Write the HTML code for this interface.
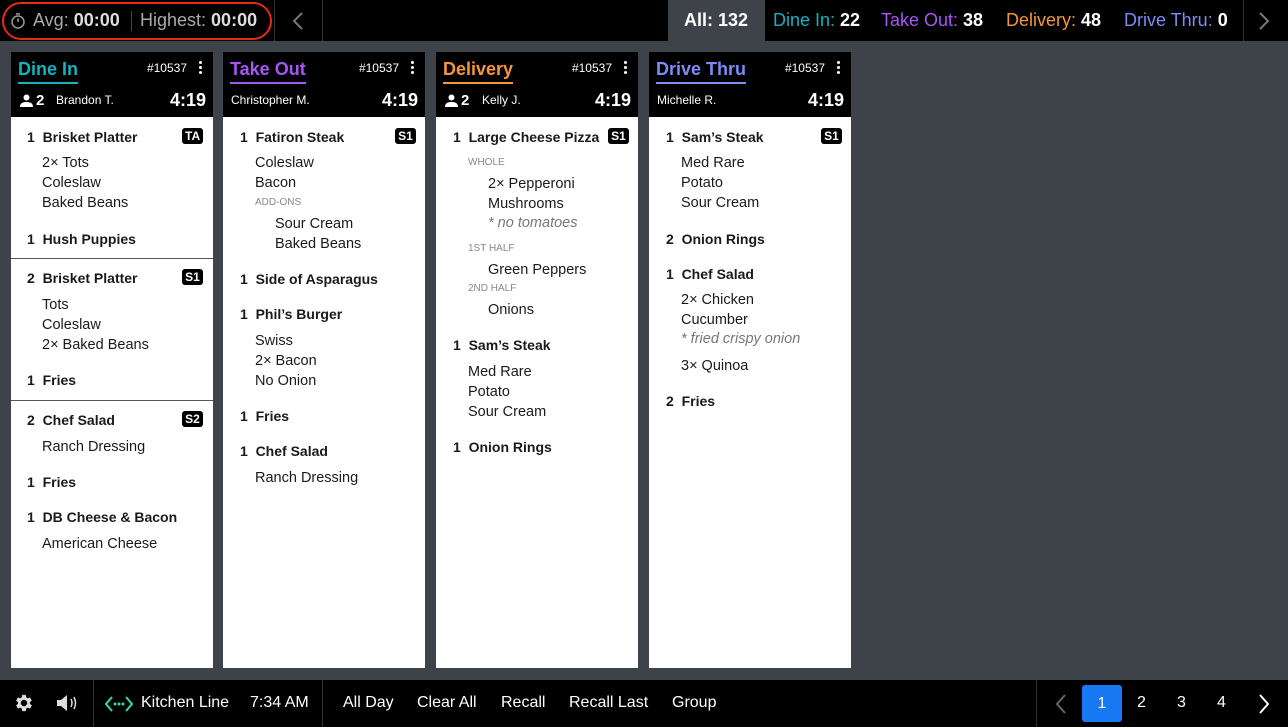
<!DOCTYPE html>
<html><head><meta charset="utf-8"><style>
*{margin:0;padding:0;box-sizing:border-box}
body{width:1288px;height:727px;background:#3e434a;font-family:"Liberation Sans",sans-serif;position:relative;overflow:hidden;color:#111}
.abs{position:absolute;white-space:nowrap}
#top{position:absolute;left:0;top:0;width:1288px;height:41px;background:#000}
#bot{position:absolute;left:0;top:680px;width:1288px;height:47px;background:#000}
.card{position:absolute;top:52px;width:202px;height:616px;background:#fff}
.hd{position:absolute;left:0;top:0;width:202px;height:65px;background:#000;color:#fff}
.ttl{position:absolute;left:7px;top:7px;font-size:18px;font-weight:bold;padding-bottom:2px;border-bottom:2px solid}
.num{position:absolute;right:26px;top:9px;font-size:12px}
.dots{position:absolute;right:11px;top:9px;width:3px}
.dots i{display:block;width:3px;height:3px;background:#fff;border-radius:50%;margin-bottom:2px}
.nm{position:absolute;top:41px;font-size:12px}
.tm{position:absolute;right:7px;top:38px;font-size:18px;font-weight:bold}
.t{position:absolute;white-space:nowrap;font-size:14.5px;line-height:18px;color:#1a1a1a}
.b{font-weight:bold;font-size:14px}
.s{font-size:10px;color:#888;line-height:12px}
.it{font-style:italic;color:#777}
.bd{position:absolute;background:#000;color:#fff;font-size:12px;font-weight:bold;padding:1px 3px;border-radius:3px;line-height:14px;width:21px;text-align:center}
.g{color:#aaa}
</style></head><body>
<div id="top">
 <div class="abs" style="left:2px;top:2px;width:270px;height:38px;border:2px solid #e8281a;border-radius:20px"></div>
 <svg class="abs" style="left:10px;top:12px" width="16" height="18" viewBox="0 0 16 18"><circle cx="8" cy="10" r="6" fill="none" stroke="#999" stroke-width="1.5"/><path d="M6 2h4M8 10V6.5" stroke="#999" stroke-width="1.5"/></svg>
 <div class="abs" style="left:33px;top:10px;font-size:18px;color:#aaa">Avg: <b style="color:#ddd">00:00</b></div>
 <div class="abs" style="left:131px;top:11px;width:1px;height:20px;background:#444"></div>
 <div class="abs" style="left:140px;top:10px;font-size:18px;color:#aaa">Highest: <b style="color:#ddd">00:00</b></div>
 <div class="abs" style="left:274px;top:0;width:1px;height:41px;background:#333"></div>
 <svg class="abs" style="left:292px;top:12px" width="12" height="18"><path d="M10 1L2 9l8 8" fill="none" stroke="#777" stroke-width="2"/></svg>
 <div class="abs" style="left:322px;top:0;width:1px;height:41px;background:#333"></div>
 <div class="abs" style="left:668px;top:0;width:97px;height:41px;background:#3e434a"></div>
 <div class="abs" style="left:684px;top:10px;font-size:18px;color:#fff;font-weight:bold">All: 132</div>
 <div class="abs" style="left:773px;top:10px;font-size:18px;color:#15b2c0">Dine In: <b style="color:#fff">22</b></div>
 <div class="abs" style="left:881px;top:10px;font-size:18px;color:#a855f7">Take Out: <b style="color:#fff">38</b></div>
 <div class="abs" style="left:1006px;top:10px;font-size:18px;color:#f5963a">Delivery: <b style="color:#fff">48</b></div>
 <div class="abs" style="left:1124px;top:10px;font-size:18px;color:#7b8cf5">Drive Thru: <b style="color:#fff">0</b></div>
 <div class="abs" style="left:1243px;top:0;width:1px;height:41px;background:#333"></div>
 <svg class="abs" style="left:1258px;top:12px" width="12" height="18"><path d="M2 1l8 8-8 8" fill="none" stroke="#777" stroke-width="2"/></svg>
</div>

<div class="card" style="left:11px">
 <div class="hd"><div class="ttl" style="color:#15b2c0">Dine In</div><div class="num">#10537</div><div class="dots"><i></i><i></i><i></i></div>
 <svg class="abs" style="left:9px;top:42px" width="13" height="13"><circle cx="6.5" cy="3.5" r="3" fill="#fff"/><path d="M0 13c0-4 3-5 6.5-5s6.5 1 6.5 5z" fill="#fff"/></svg>
 <div class="abs" style="left:25px;top:40px;font-size:15px;font-weight:bold">2</div>
 <div class="nm" style="left:45px">Brandon T.</div><div class="tm">4:19</div></div>
</div>
<div class="card" style="left:223px">
 <div class="hd"><div class="ttl" style="color:#a855f7">Take Out</div><div class="num">#10537</div><div class="dots"><i></i><i></i><i></i></div>
 <div class="nm" style="left:8px">Christopher M.</div><div class="tm">4:19</div></div>
</div>
<div class="card" style="left:436px">
 <div class="hd"><div class="ttl" style="color:#f5963a">Delivery</div><div class="num">#10537</div><div class="dots"><i></i><i></i><i></i></div>
 <svg class="abs" style="left:9px;top:42px" width="13" height="13"><circle cx="6.5" cy="3.5" r="3" fill="#fff"/><path d="M0 13c0-4 3-5 6.5-5s6.5 1 6.5 5z" fill="#fff"/></svg>
 <div class="abs" style="left:25px;top:40px;font-size:15px;font-weight:bold">2</div>
 <div class="nm" style="left:46px">Kelly J.</div><div class="tm">4:19</div></div>
</div>
<div class="card" style="left:649px">
 <div class="hd"><div class="ttl" style="color:#7b8cf5">Drive Thru</div><div class="num">#10537</div><div class="dots"><i></i><i></i><i></i></div>
 <div class="nm" style="left:8px">Michelle R.</div><div class="tm">4:19</div></div>
</div>

<div class="t b" style="left:27px;top:128px">1&nbsp;&nbsp;Brisket Platter</div><div class="bd" style="left:182px;top:128px">TA</div>
<div class="t" style="left:42px;top:154px">2× Tots</div>
<div class="t" style="left:42px;top:174px">Coleslaw</div>
<div class="t" style="left:42px;top:194px">Baked Beans</div>
<div class="t b" style="left:27px;top:230px">1&nbsp;&nbsp;Hush Puppies</div>
<div class="abs" style="left:11px;top:258px;width:202px;height:1px;background:#555"></div>
<div class="t b" style="left:27px;top:269px">2&nbsp;&nbsp;Brisket Platter</div><div class="bd" style="left:182px;top:269px">S1</div>
<div class="t" style="left:42px;top:296px">Tots</div>
<div class="t" style="left:42px;top:316px">Coleslaw</div>
<div class="t" style="left:42px;top:336px">2× Baked Beans</div>
<div class="t b" style="left:27px;top:371px">1&nbsp;&nbsp;Fries</div>
<div class="abs" style="left:11px;top:400px;width:202px;height:1px;background:#555"></div>
<div class="t b" style="left:27px;top:411px">2&nbsp;&nbsp;Chef Salad</div><div class="bd" style="left:182px;top:411px">S2</div>
<div class="t" style="left:42px;top:438px">Ranch Dressing</div>
<div class="t b" style="left:27px;top:473px">1&nbsp;&nbsp;Fries</div>
<div class="t b" style="left:27px;top:508px">1&nbsp;&nbsp;DB Cheese &amp; Bacon</div>
<div class="t" style="left:42px;top:535px">American Cheese</div>

<div class="t b" style="left:240px;top:128px">1&nbsp;&nbsp;Fatiron Steak</div><div class="bd" style="left:395px;top:128px">S1</div>
<div class="t" style="left:255px;top:154px">Coleslaw</div>
<div class="t" style="left:255px;top:174px">Bacon</div>
<div class="t s" style="left:255px;top:197px">ADD-ONS</div>
<div class="t" style="left:275px;top:215px">Sour Cream</div>
<div class="t" style="left:275px;top:235px">Baked Beans</div>
<div class="t b" style="left:240px;top:270px">1&nbsp;&nbsp;Side of Asparagus</div>
<div class="t b" style="left:240px;top:305px">1&nbsp;&nbsp;Phil’s Burger</div>
<div class="t" style="left:255px;top:332px">Swiss</div>
<div class="t" style="left:255px;top:352px">2× Bacon</div>
<div class="t" style="left:255px;top:372px">No Onion</div>
<div class="t b" style="left:240px;top:407px">1&nbsp;&nbsp;Fries</div>
<div class="t b" style="left:240px;top:442px">1&nbsp;&nbsp;Chef Salad</div>
<div class="t" style="left:255px;top:469px">Ranch Dressing</div>

<div class="t b" style="left:453px;top:128px">1&nbsp;&nbsp;Large Cheese Pizza</div><div class="bd" style="left:608px;top:128px">S1</div>
<div class="t s" style="left:468px;top:157px">WHOLE</div>
<div class="t" style="left:488px;top:175px">2× Pepperoni</div>
<div class="t" style="left:488px;top:195px">Mushrooms</div>
<div class="t it" style="left:488px;top:214px">* no tomatoes</div>
<div class="t s" style="left:468px;top:243px">1ST HALF</div>
<div class="t" style="left:488px;top:261px">Green Peppers</div>
<div class="t s" style="left:468px;top:283px">2ND HALF</div>
<div class="t" style="left:488px;top:301px">Onions</div>
<div class="t b" style="left:453px;top:336px">1&nbsp;&nbsp;Sam’s Steak</div>
<div class="t" style="left:468px;top:363px">Med Rare</div>
<div class="t" style="left:468px;top:383px">Potato</div>
<div class="t" style="left:468px;top:403px">Sour Cream</div>
<div class="t b" style="left:453px;top:438px">1&nbsp;&nbsp;Onion Rings</div>

<div class="t b" style="left:666px;top:128px">1&nbsp;&nbsp;Sam’s Steak</div><div class="bd" style="left:821px;top:128px">S1</div>
<div class="t" style="left:681px;top:154px">Med Rare</div>
<div class="t" style="left:681px;top:174px">Potato</div>
<div class="t" style="left:681px;top:194px">Sour Cream</div>
<div class="t b" style="left:666px;top:230px">2&nbsp;&nbsp;Onion Rings</div>
<div class="t b" style="left:666px;top:265px">1&nbsp;&nbsp;Chef Salad</div>
<div class="t" style="left:681px;top:291px">2× Chicken</div>
<div class="t" style="left:681px;top:311px">Cucumber</div>
<div class="t it" style="left:681px;top:330px">* fried crispy onion</div>
<div class="t" style="left:681px;top:357px">3× Quinoa</div>
<div class="t b" style="left:666px;top:392px">2&nbsp;&nbsp;Fries</div>

<div id="bot">
 <svg class="abs" style="left:13px;top:12px" width="22" height="22" viewBox="0 0 24 24"><path fill="#ddd" d="M19.4 13a7.5 7.5 0 000-2l2.1-1.6-2-3.5-2.5 1a7.3 7.3 0 00-1.7-1L15 3.2h-4l-.4 2.7a7.3 7.3 0 00-1.7 1l-2.5-1-2 3.5L6.5 11a7.5 7.5 0 000 2l-2.1 1.6 2 3.5 2.5-1a7.3 7.3 0 001.7 1l.4 2.7h4l.4-2.7a7.3 7.3 0 001.7-1l2.5 1 2-3.5zM13 15.5a3.5 3.5 0 110-7 3.5 3.5 0 010 7z" transform="translate(-1 0)"/></svg>
 <svg class="abs" style="left:55px;top:13px" width="30" height="20" viewBox="0 0 30 20"><path d="M2 7h4l6-5v16l-6-5H2z" fill="#ddd"/><path d="M16 6q2 4 0 8M19 4q3 6 0 12" fill="none" stroke="#ddd" stroke-width="1.5"/></svg>
 <div class="abs" style="left:93px;top:0;width:1px;height:47px;background:#333"></div>
 <svg class="abs" style="left:105px;top:14px" width="28" height="20" viewBox="0 0 28 20"><path d="M7 3L1 10l6 7M21 3l6 7-6 7" fill="none" stroke="#2fe09a" stroke-width="2"/><circle cx="10" cy="10" r="1.5" fill="#2fe09a"/><circle cx="14" cy="10" r="1.5" fill="#2fe09a"/><circle cx="18" cy="10" r="1.5" fill="#2fe09a"/></svg>
 <div class="abs" style="left:141px;top:14px;font-size:16px;color:#fff">Kitchen Line</div>
 <div class="abs" style="left:250px;top:14px;font-size:16px;color:#fff">7:34 AM</div>
 <div class="abs" style="left:322px;top:0;width:1px;height:47px;background:#333"></div>
 <div class="abs" style="left:343px;top:14px;font-size:16px;color:#fff">All Day</div>
 <div class="abs" style="left:417px;top:14px;font-size:16px;color:#fff">Clear All</div>
 <div class="abs" style="left:501px;top:14px;font-size:16px;color:#fff">Recall</div>
 <div class="abs" style="left:569px;top:14px;font-size:16px;color:#fff">Recall Last</div>
 <div class="abs" style="left:672px;top:14px;font-size:16px;color:#fff">Group</div>
 <div class="abs" style="left:1036px;top:0;width:1px;height:47px;background:#333"></div>
 <svg class="abs" style="left:1055px;top:14px" width="12" height="20"><path d="M10 1L2 10l8 9" fill="none" stroke="#666" stroke-width="2"/></svg>
 <div class="abs" style="left:1082px;top:5px;width:40px;height:37px;background:#1877f2;border-radius:3px;color:#fff;font-size:16px;text-align:center;line-height:37px">1</div>
 <div class="abs" style="left:1137px;top:14px;font-size:16px;color:#fff">2</div>
 <div class="abs" style="left:1177px;top:14px;font-size:16px;color:#fff">3</div>
 <div class="abs" style="left:1217px;top:14px;font-size:16px;color:#fff">4</div>
 <svg class="abs" style="left:1258px;top:14px" width="12" height="20"><path d="M2 1l8 9-8 9" fill="none" stroke="#fff" stroke-width="2"/></svg>
</div>
</body></html>
